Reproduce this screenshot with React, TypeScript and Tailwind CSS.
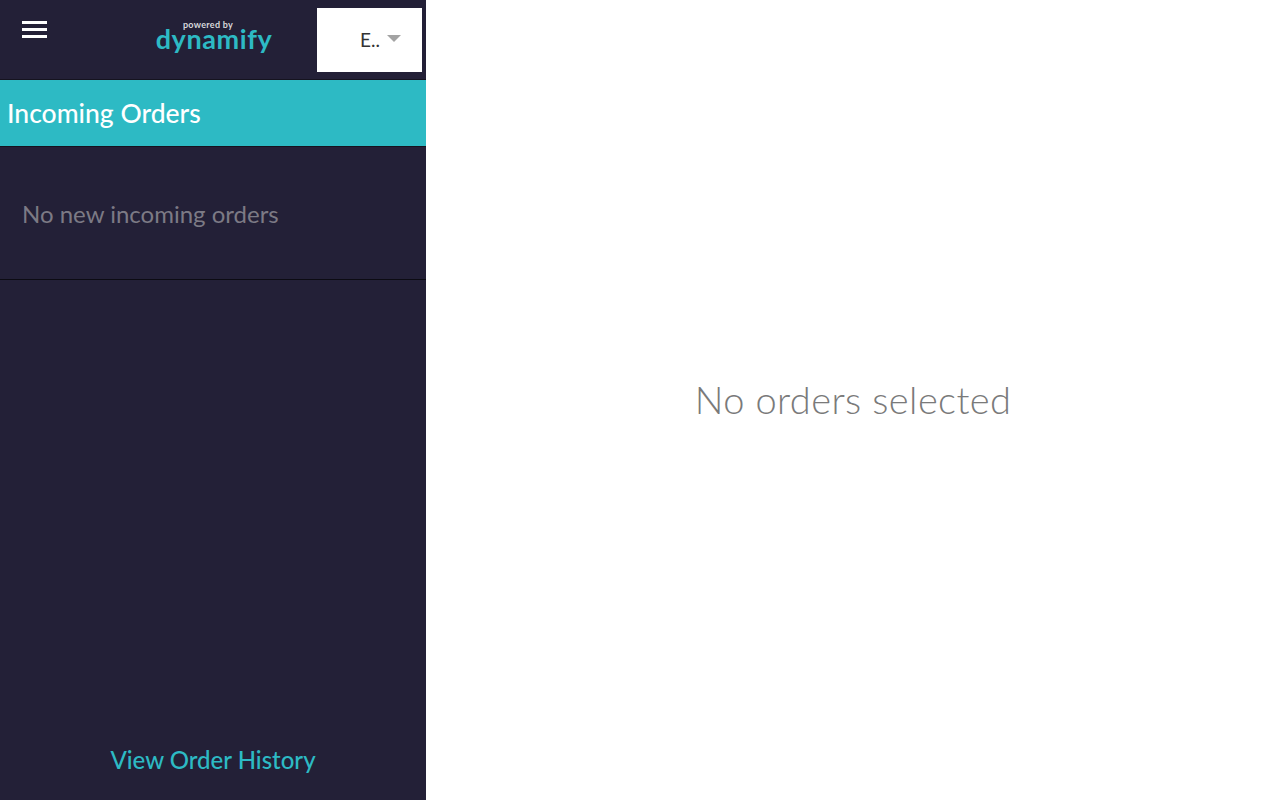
const font = "font-['Lato','Noto_Sans',sans-serif]"

function Header() {
    return (
        <header className="flex h-20 shrink-0 items-start border-b border-[#15131f]">
            {/* Hamburger */}
            <button className="mt-[21px] ml-[22px] flex w-[25px] flex-col gap-[4px]">
                <span className="h-[3px] bg-white" />
                <span className="h-[3px] bg-white" />
                <span className="h-[3px] bg-white" />
            </button>

            {/* Logo */}
            <div className="mt-[20px] ml-[108px] flex w-[118px] flex-col items-center">
                <span className="pr-3 text-[9px] leading-[9px] font-bold tracking-[0.3px] text-[#d8d8dc]">powered by</span>
                <span className="text-[27px] leading-[20px] font-bold tracking-[0.6px] text-[#2dbac4]">dynamify</span>
            </div>

            {/* Store select */}
            <div className="mt-2 ml-[44px] flex h-16 w-[105px] items-start bg-white">
                <span className="mt-[20px] ml-[43px] text-[19px] leading-6 text-[#333333]">E..</span>
                <span className="mt-[27px] ml-[7px] h-0 w-0 border-x-[7px] border-t-[7px] border-x-transparent border-t-[#a3a3a3]" />
            </div>
        </header>
    )
}

export default function App() {
    return (
        <div className={`flex h-[800px] w-[1280px] overflow-hidden bg-white ${font}`}>
            <aside className="flex w-[426px] shrink-0 flex-col bg-[#232037]">
                <Header />

                <div className="flex h-[67px] shrink-0 items-center border-b border-[#15131f] bg-[#2dbac4] pl-[7px]">
                    <h1 className="text-[26.5px] leading-none font-medium text-white">Incoming Orders</h1>
                </div>

                <div className="flex h-[133px] shrink-0 items-start border-b border-[#0c0b13] pt-[52px] pl-[22px]">
                    <p className="text-[24px] leading-[30px] text-[#7c7a85]">No new incoming orders</p>
                </div>

                <div className="flex flex-1 items-end justify-center pb-[23px]">
                    <a className="text-[24px] leading-[34px] font-medium text-[#2dbac4]">View Order History</a>
                </div>
            </aside>

            <main className="flex flex-1 items-center justify-center pb-[2px]">
                <p className="text-[38px] leading-none font-light tracking-[0.4px] text-[#7a7a7a]">No orders selected</p>
            </main>
        </div>
    )
}
